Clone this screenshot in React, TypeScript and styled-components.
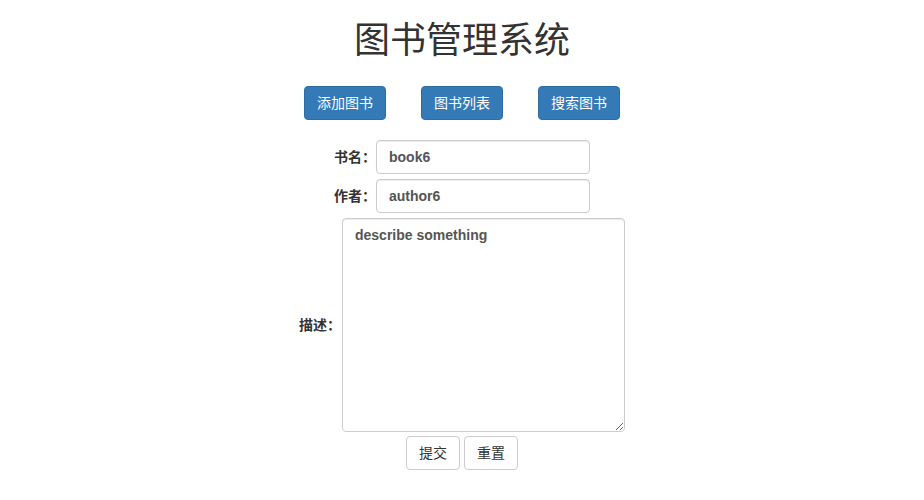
import React from "react";
import styled, { createGlobalStyle } from "styled-components";

const GlobalStyle = createGlobalStyle`
  html, body {
    margin: 0;
    padding: 0;
    background: #ffffff;
  }
  body {
    font-family: "Liberation Sans", "Noto Sans CJK SC", sans-serif;
    font-size: 14px;
    line-height: 1.42857;
    color: #333333;
  }
  * { box-sizing: border-box; }
`;

const Page = styled.div`
  display: flex;
  flex-direction: column;
  align-items: center;
  width: 100%;
`;

const Title = styled.h1`
  margin: 17px 0 0;
  font-family: "Noto Sans CJK SC", sans-serif;
  font-size: 36px;
  font-weight: 400;
  line-height: 40px;
  color: #333333;
  text-align: center;
`;

const NavBar = styled.div`
  display: flex;
  gap: 35px;
  margin-top: 29px;
`;

const Button = styled.button<{ $primary?: boolean }>`
  height: 34px;
  padding: 6px 12px;
  font-family: "Liberation Sans", "Noto Sans CJK SC", sans-serif;
  font-size: 14px;
  line-height: 20px;
  border-radius: 4px;
  cursor: pointer;
  border: 1px solid ${(p) => (p.$primary ? "#2e6da4" : "#cccccc")};
  background: ${(p) => (p.$primary ? "#337ab7" : "#ffffff")};
  color: ${(p) => (p.$primary ? "#ffffff" : "#333333")};
`;

const Form = styled.form`
  display: flex;
  flex-direction: column;
  align-items: center;
  gap: 5px;
  margin-top: 20px;
`;

const Row = styled.div`
  display: flex;
  align-items: center;
`;

const Label = styled.label`
  width: 42px;
  font-weight: 700;
  font-size: 14px;
  line-height: 20px;
  color: #333333;
  white-space: nowrap;
`;

const fieldStyles = `
  border: 1px solid #cccccc;
  border-radius: 4px;
  padding: 6px 12px;
  font-family: "Liberation Sans", "Noto Sans CJK SC", sans-serif;
  font-size: 14px;
  font-weight: 700;
  line-height: 20px;
  color: #555555;
  background: #ffffff;
  box-shadow: inset 0 1px 1px rgba(0, 0, 0, 0.075);
  outline: none;
`;

const Input = styled.input`
  ${fieldStyles}
  width: 214px;
  height: 34px;
`;

const TextArea = styled.textarea`
  ${fieldStyles}
  width: 283px;
  height: 214px;
  margin-left: 1px;
`;

const Actions = styled.div`
  display: flex;
  gap: 4px;
  margin-top: -1px;
`;

export default function App() {
  return (
    <>
      <GlobalStyle />
      <Page>
        <Title>图书管理系统</Title>
        <NavBar>
          <Button $primary>添加图书</Button>
          <Button $primary>图书列表</Button>
          <Button $primary>搜索图书</Button>
        </NavBar>
        <Form onSubmit={(e) => e.preventDefault()}>
          <Row>
            <Label>书名：</Label>
            <Input defaultValue="book6" />
          </Row>
          <Row>
            <Label>作者：</Label>
            <Input defaultValue="author6" />
          </Row>
          <Row>
            <Label>描述：</Label>
            <TextArea defaultValue="describe something" />
          </Row>
          <Actions>
            <Button type="submit">提交</Button>
            <Button type="reset">重置</Button>
          </Actions>
        </Form>
      </Page>
    </>
  );
}
